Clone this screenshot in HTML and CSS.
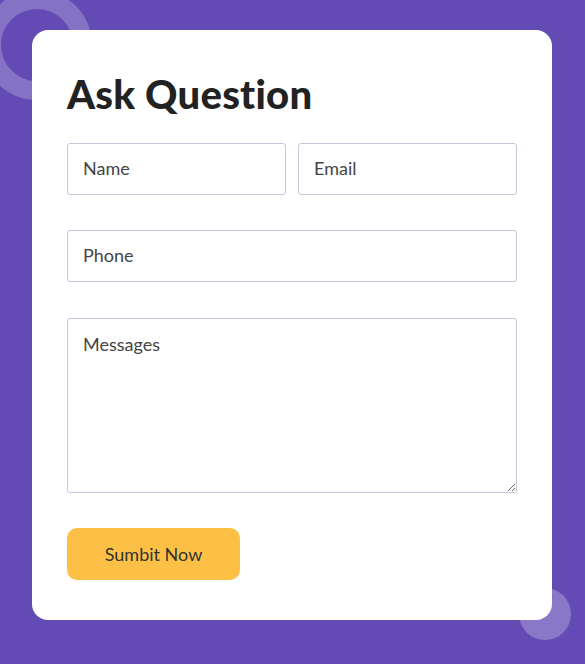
FILE: index.html
```html
<!DOCTYPE html>
<html lang="en">
<head>
<meta charset="utf-8">
<title>Ask Question</title>
<link rel="stylesheet" href="styles.css">
</head>
<body>
<div class="page">
  <span class="ring"></span>
  <span class="dot"></span>
  <form class="card">
    <h1 class="title">Ask Question</h1>
    <div class="row two">
      <input class="field" type="text" placeholder="Name">
      <input class="field" type="email" placeholder="Email">
    </div>
    <div class="row">
      <input class="field" type="text" placeholder="Phone">
    </div>
    <div class="row msg">
      <textarea class="field area" placeholder="Messages"></textarea>
    </div>
    <div class="row">
      <button class="btn" type="button">Sumbit Now</button>
    </div>
  </form>
</div>
</body>
</html>
```
FILE: styles.css
```css
* { box-sizing: border-box; }
html, body { margin: 0; padding: 0; }
body {
  background: #624bb4;
  font-family: Lato, "Open Sans", sans-serif;
  width: 585px;
  height: 664px;
  overflow: hidden;
}
.page {
  position: relative;
  width: 585px;
  height: 664px;
  padding: 30px 33px 0 32px;
}
.ring {
  position: absolute;
  left: -18px;
  top: -10px;
  width: 110px;
  height: 110px;
  border-radius: 50%;
  border: 19px solid rgba(255,255,255,0.22);
}
.dot {
  position: absolute;
  left: 519px;
  top: 588px;
  width: 52px;
  height: 52px;
  border-radius: 50%;
  background: rgba(255,255,255,0.25);
}
.card {
  position: relative;
  z-index: 1;
  background: #fff;
  border-radius: 16px;
  width: 520px;
  height: 590px;
  padding: 40px 35px 0 35px;
  display: flex;
  flex-direction: column;
  gap: 35px;
}
.title {
  margin: 0 0 -10px 0;
  font-size: 40px;
  line-height: 48px;
  font-weight: 900;
  letter-spacing: 0.25px;
  color: #222;
  font-variant-ligatures: none;
}
.row { display: flex; flex: none; }
.row.two { gap: 12px; }
.row.msg { margin-top: 1px; }
.field {
  flex: 1;
  min-width: 0;
  height: 52px;
  border: 1px solid #c9c6dc;
  border-radius: 3px;
  padding: 0 15px 2px 15px;
  font-family: Lato, sans-serif;
  font-size: 18px;
  color: #444;
  background: #fff;
  outline: none;
}
.field::placeholder { color: #444; opacity: 1; }
.area {
  display: block;
  height: 175px;
  padding: 14px 15px;
  resize: vertical;
}
.btn {
  width: 173px;
  height: 52px;
  border: none;
  border-radius: 10px;
  background: #fcc046;
  color: #333;
  font-family: Lato, sans-serif;
  font-size: 18px;
  cursor: pointer;
}
```
